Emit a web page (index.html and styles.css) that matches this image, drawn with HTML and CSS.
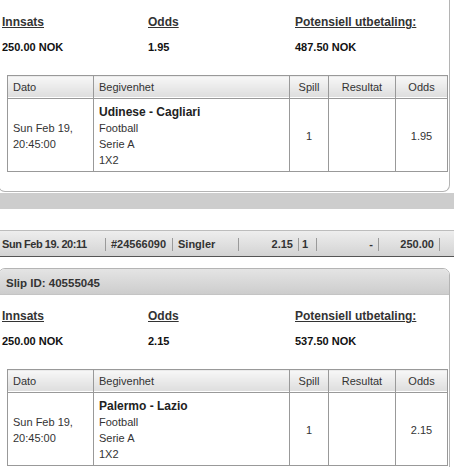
FILE: index.html
```html
<!DOCTYPE html>
<html>
<head>
<meta charset="utf-8">
<link rel="stylesheet" href="styles.css">
</head>
<body>
<div class="page">
  <div class="card card-cont">
    <div class="card-body">
      <div class="summary">
        <div class="label">Innsats</div>
        <div class="label">Odds</div>
        <div class="label">Potensiell utbetaling:</div>
        <div class="value">250.00 NOK</div>
        <div class="value">1.95</div>
        <div class="value">487.50 NOK</div>
      </div>
      <table class="bets">
        <thead>
          <tr><th class="c-date">Dato</th><th class="c-event">Begivenhet</th><th class="c-spill">Spill</th><th class="c-res">Resultat</th><th class="c-odds">Odds</th></tr>
        </thead>
        <tbody>
          <tr>
            <td class="c-date">Sun Feb 19,<br>20:45:00</td>
            <td class="c-event"><b>Udinese - Cagliari</b><br>Football<br>Serie A<br>1X2</td>
            <td class="c-spill">1</td>
            <td class="c-res"></td>
            <td class="c-odds">1.95</td>
          </tr>
        </tbody>
      </table>
    </div>
  </div>
  <div class="band"></div>

  <div class="summary-bar">
    <span class="cell c1">Sun Feb 19. 20:11</span>
    <span class="cell c2">#24566090</span>
    <span class="cell c3">Singler</span>
    <span class="cell c4">2.15</span>
    <span class="cell c5">1</span>
    <span class="cell c6">-</span>
    <span class="cell c7">250.00</span>
  </div>

  <div class="card">
    <div class="slip-head">Slip ID: 40555045</div>
    <div class="card-body">
      <div class="summary">
        <div class="label">Innsats</div>
        <div class="label">Odds</div>
        <div class="label">Potensiell utbetaling:</div>
        <div class="value">250.00 NOK</div>
        <div class="value">2.15</div>
        <div class="value">537.50 NOK</div>
      </div>
      <table class="bets">
        <thead>
          <tr><th class="c-date">Dato</th><th class="c-event">Begivenhet</th><th class="c-spill">Spill</th><th class="c-res">Resultat</th><th class="c-odds">Odds</th></tr>
        </thead>
        <tbody>
          <tr>
            <td class="c-date">Sun Feb 19,<br>20:45:00</td>
            <td class="c-event"><b>Palermo - Lazio</b><br>Football<br>Serie A<br>1X2</td>
            <td class="c-spill">1</td>
            <td class="c-res"></td>
            <td class="c-odds">2.15</td>
          </tr>
        </tbody>
      </table>
    </div>
  </div>
</div>
</body>
</html>
```

FILE: styles.css
```css
* { box-sizing: border-box; }
html, body {
  margin: 0;
  padding: 0;
  background: #ffffff;
  overflow: hidden;
}
body {
  font-family: "Liberation Sans", Arial, sans-serif;
  color: #333;
  width: 454px;
  height: 467px;
}
.card {
  width: 452px;
  margin-left: -2px;
  border: 1px solid #b4b4b4;
  border-radius: 7px;
  background: #fff;
}
.card-cont {
  border-top: none;
  border-radius: 0 0 7px 7px;
}
.card-cont .card-body {
  padding-top: 15px;
}
.slip-head {
  height: 26px;
  padding-left: 7px;
  display: flex;
  align-items: center;
  padding-top: 3px;
  font-size: 11.5px;
  font-weight: bold;
  color: #333;
  background: linear-gradient(#e4e4e4, #cdcdcd);
  border-radius: 6px 6px 0 0;
  border-bottom: 1px solid #c4c4c4;
}
.card-body {
  padding: 14px 3px 19px 3px;
}
.summary {
  display: grid;
  grid-template-columns: 146px 147px auto;
  row-gap: 10px;
}
.label {
  font-size: 12px;
  line-height: 15px;
  font-weight: bold;
  text-decoration: underline;
  color: #333;
}
.value {
  font-size: 11px;
  line-height: 14px;
  font-weight: bold;
  color: #111;
}
.bets {
  margin: 21px 0 0 5px;
  width: 440px;
  border-collapse: collapse;
  table-layout: fixed;
  font-size: 11px;
  color: #333;
}
.bets th, .bets td {
  border: 1px solid #999;
}
.bets th {
  height: 23px;
  font-weight: normal;
  padding: 0 5px;
  background: linear-gradient(#f7f7f7, #dcdcdc);
  color: #333;
  box-shadow: inset 0 -1px 0 #fff;
}
.bets td {
  height: 73px;
  padding: 4px 5px 3px 5px;
  line-height: 16px;
  vertical-align: middle;
}
.bets td.c-event b {
  font-size: 12px;
  color: #222;
}
.c-date { width: 86px; text-align: left; }
.c-event { width: 196px; text-align: left; }
.c-spill { width: 39px; text-align: center; }
.c-res { width: 67px; text-align: center; }
.c-odds { width: 52px; text-align: center; }
.bets th.c-spill, .bets th.c-res, .bets th.c-odds { padding: 0; }
.bets td.c-spill, .bets td.c-res, .bets td.c-odds { padding-left: 0; padding-right: 0; }

.band {
  height: 16px;
  margin-top: 1px;
  background: #cdcdcd;
}
.summary-bar {
  margin-top: 21px;
  height: 27px;
  border-top: 1px solid #bdbdbd;
  border-bottom: 1px solid #555;
  background: linear-gradient(#eeeeee, #d3d3d3);
  display: flex;
  align-items: center;
  padding-top: 2px;
  margin-bottom: 11px;
}
.cell {
  display: block;
  font-size: 11px;
  line-height: 13px;
  font-weight: bold;
  color: #333;
  border-right: 1px solid #9a9a9a;
  white-space: nowrap;
}
.c1 { width: 106px; padding-left: 2px; letter-spacing: -0.45px; }
.c2 { width: 67px; padding-left: 5px; }
.c3 { width: 66px; padding-left: 5px; }
.c4 { width: 60px; text-align: right; padding-right: 5px; }
.c5 { width: 18px; padding-left: 3px; }
.c6 { width: 62px; text-align: right; padding-right: 5px; }
.c7 { width: 61px; text-align: right; padding-right: 5px; }
```
